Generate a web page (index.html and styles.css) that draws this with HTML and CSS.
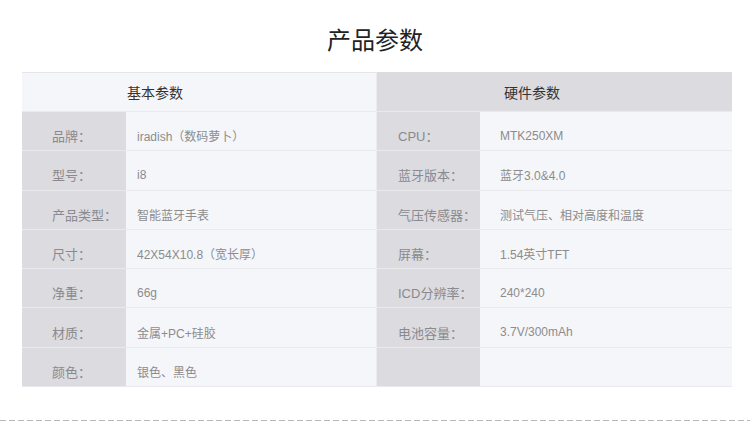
FILE: index.html
```html
<!DOCTYPE html>
<html lang="zh-CN">
<head>
<meta charset="utf-8">
<title>产品参数</title>
<link rel="stylesheet" href="styles.css">
</head>
<body>
<div class="page">
  <h1 class="title">产品参数</h1>
  <div class="spec">
    <div class="col col-basic">
      <div class="head">基本参数</div>
      <div class="row"><div class="label">品牌：</div><div class="value">iradish（数码萝卜）</div></div>
      <div class="row"><div class="label">型号：</div><div class="value">i8</div></div>
      <div class="row"><div class="label">产品类型：</div><div class="value">智能蓝牙手表</div></div>
      <div class="row"><div class="label">尺寸：</div><div class="value">42X54X10.8（宽长厚）</div></div>
      <div class="row"><div class="label">净重：</div><div class="value">66g</div></div>
      <div class="row"><div class="label">材质：</div><div class="value">金属+PC+硅胶</div></div>
      <div class="row"><div class="label">颜色：</div><div class="value">银色、黑色</div></div>
    </div>
    <div class="col col-hw">
      <div class="head">硬件参数</div>
      <div class="row"><div class="label">CPU：</div><div class="value">MTK250XM</div></div>
      <div class="row"><div class="label">蓝牙版本：</div><div class="value">蓝牙3.0&amp;4.0</div></div>
      <div class="row"><div class="label">气压传感器：</div><div class="value">测试气压、相对高度和温度</div></div>
      <div class="row"><div class="label">屏幕：</div><div class="value">1.54英寸TFT</div></div>
      <div class="row"><div class="label">ICD分辨率：</div><div class="value">240*240</div></div>
      <div class="row"><div class="label">电池容量：</div><div class="value">3.7V/300mAh</div></div>
      <div class="row"><div class="label"></div><div class="value"></div></div>
    </div>
  </div>
  <div class="divider"></div>
</div>
</body>
</html>
```

FILE: styles.css
```css
* { box-sizing: border-box; }

html, body {
  margin: 0;
  padding: 0;
  background: #ffffff;
}

body {
  font-family: "Liberation Sans", "Noto Sans CJK SC", sans-serif;
  color: #888888;
}

.page {
  width: 750px;
  height: 443px;
  padding-top: 23px;
}

.title {
  margin: 0;
  height: 49px;
  font-family: "Noto Sans CJK SC", sans-serif;
  font-size: 24px;
  font-weight: 400;
  line-height: 32px;
  color: #222222;
  text-align: center;
}

.spec {
  display: grid;
  grid-template-columns: 354px 355px;
  column-gap: 1px;
  margin-left: 22px;
  width: 710px;
  background: #ebebef;
}

.col {
  display: flex;
  flex-direction: column;
}

.head {
  height: 40px;
  display: flex;
  align-items: center;
  font-family: "Noto Sans CJK SC", sans-serif;
  font-size: 14px;
  color: #333333;
  border-bottom: 1px solid #eaeaee;
}

.col-basic .head {
  background: #f5f6fa;
  padding-left: 105px;
  border-top: 1px solid #e6e6ea;
}

.col-hw .head {
  background: #dcdce0;
  padding-left: 127px;
}

.row {
  display: flex;
  height: 39.3px;
  border-bottom: 1px solid #eaeaee;
}

.label {
  background: #dcdbe0;
  display: flex;
  align-items: center;
  padding-top: 9px;
  font-size: 13px;
  color: #8a8a8e;
}

.value {
  flex: 1;
  background: #f5f6fa;
  display: flex;
  align-items: center;
  padding-top: 9px;
  font-size: 12px;
  color: #8c8c8c;
}

.col-basic .label {
  width: 104px;
  padding-left: 30px;
}

.col-basic .value {
  padding-left: 11px;
}

.col-hw .label {
  width: 103px;
  padding-left: 21px;
}

.col-hw .value {
  padding-left: 20px;
}

.divider {
  margin-top: 33px;
  height: 1px;
  background: repeating-linear-gradient(to right, #b8b8b8 0, #b8b8b8 6px, transparent 6px, transparent 9px);
}
```
